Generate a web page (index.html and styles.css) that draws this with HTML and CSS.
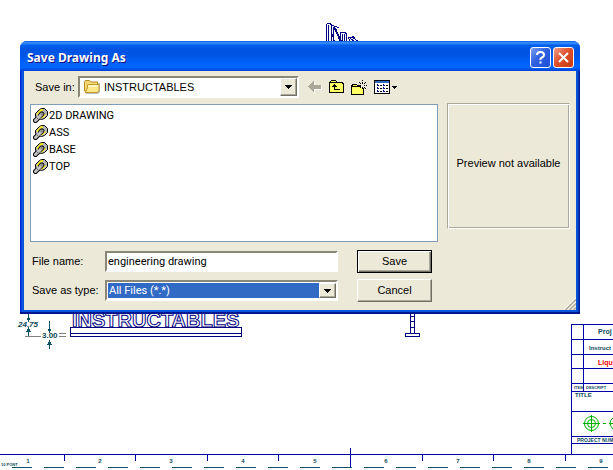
FILE: index.html
```html
<!DOCTYPE html>
<html lang="en">
<head>
<meta charset="utf-8">
<title>Save Drawing As</title>
<link rel="stylesheet" href="styles.css">
</head>
<body>
<svg class="sheet" aria-hidden="true">
  <!-- model, seen from above -->
  <g class="ink">
    <path d="M324.500 41.500h2v-17l1-1h3l1 2v16M328.500 41v-16M331.500 25.500h2l2 3 6 13M333.500 41v-14l7 14.500M331.500 33l3 8.500M340.500 41v-8l2-1h2l2 2v8M342.500 34v7.500M344.500 34v7.500M335.500 26l3 2M347.500 37.500h5l6 4M349.500 41l-1-4M350.500 38.500l4 3M352.500 36l2 2"/>
    <path d="M70.500 327v9.500h171v-9.500M70.500 333.500h171M70.500 327.500h171"/>
    <path d="M410.500 313v20M414.500 313v20M410.500 316.500h4M410.500 321.500h4M410.500 327.500h4M405.500 333.500h14v3h-14z"/>
  </g>
  <text class="lettering" x="72" y="327">INSTRUCTABLES</text>
  <!-- dimensions -->
  <g class="extension"><path d="M25 336.500h16M59 333.500h7M59 336.500h7"/></g>
  <g class="dimension">
    <path d="M28.500 313v7M28.500 328v8M49.500 321v10M49.500 341v8"/>
    <path d="M27 318h3l-1.500 3zM27 331h3l-1.500-3zM48 329h3l-1.500 3zM48 344h3l-1.500-3z"/>
  </g>
  <text class="note italic" x="18" y="327">24.75</text>
  <text class="note" x="42" y="338">3.00</text>
  <!-- title block -->
  <g class="frame">
    <path d="M0 454.500h613M571.500 324v130M583.500 324v67M571 324.500h42M571 339.500h42M571 354.500h42M571 368.500h42M571 383.500h42M571 391.500h42M571 411.500h42M571 436.500h42M571 443.500h42"/>
    <path d="M64.500 454v7M135.500 454v7M207.500 454v7M278.500 454v7M350.500 448v19M422.500 454v7M493.500 454v7M565.500 454v7"/>
  </g>
  <path class="trim" d="M12 467.500h601"/>
  <g class="projection">
    <circle cx="591.500" cy="423.500" r="7"/><circle cx="591.500" cy="423.500" r="4"/>
    <path d="M583 423.500h17M591.500 415v17M603 423.500h3M609 423.500h4M613 418q-3 2-3 5t3 6"/>
  </g>
  <text class="note small" x="598" y="334">Proj</text>
  <text class="note mini" x="589" y="350">Instruct</text>
  <text class="note small red" x="598" y="365">Liqu</text>
  <text class="note tiny" x="574" y="389">ITEM</text>
  <text class="note tiny" x="586" y="389">DESCRIPT</text>
  <text class="note mini" x="575" y="397">TITLE</text>
  <text class="note micro" x="577" y="442">PROJECT NUM</text>
  <g class="zones">
    <text x="28" y="463">1</text><text x="100" y="463">2</text><text x="171" y="463">3</text>
    <text x="243" y="463">4</text><text x="315" y="463">5</text><text x="386" y="463">6</text>
    <text x="458" y="463">7</text><text x="529" y="463">8</text><text x="601" y="463">9</text>
  </g>
  <text class="note tiny" x="1" y="466">10 PONT</text>
</svg>

<svg class="defs" aria-hidden="true">
  <symbol id="part" viewBox="0 0 15 15">
    <path fill="none" stroke="#000" stroke-width="5" stroke-linecap="round" d="M2.500 12.500L6 9"/>
    <path fill="#b4b4b4" stroke="#000" d="M2.500 8.500v-3l4-4 2-1h3l3 3v4l-3 3-3 1-3-1z"/>
    <path fill="none" stroke="#fff200" stroke-width="1.500" d="M4 6.500l4-4.500h2M8.500 10l4-3.500"/>
    <path fill="#909090" stroke="#000" d="M5.500 8.500v-2l2-2.500h2.500l1 1.500-.5 2L8 9.500z"/>
    <path fill="none" stroke="#c4c4c4" stroke-width="3" stroke-linecap="round" d="M2.500 12.500L7 8"/>
    <path fill="none" stroke="#666" d="M3.500 9.500l2 2"/>
  </symbol>
  <symbol id="drop" viewBox="0 0 7 4"><path fill="#000" d="M0 0h7v1H6v1H5v1H4v1H3V3H2V2H1V1H0z"/></symbol>
</svg>

<form class="dialog" aria-labelledby="dialog-title">
  <header class="titlebar">
    <h1 id="dialog-title">Save Drawing As</h1>
    <button type="button" class="caption help" aria-label="Help">
      <svg width="11" height="13" viewBox="0 0 11 13"><path d="M2 4q0-3 3.500-3T9 4q0 1.500-2 2.500T5.500 9M5.500 10.500v2"/></svg>
    </button>
    <button type="button" class="caption close" aria-label="Close">
      <svg width="11" height="11" viewBox="0 0 11 11"><path d="M1 1l9 9M10 1l-9 9"/></svg>
    </button>
  </header>

  <div class="content">
    <div class="lookin">
      <label for="folder">Save in:</label>
      <div class="combo">
        <svg class="folder" width="16" height="14" viewBox="0 0 16 14"><path fill="#777" opacity=".5" d="M2 3h14v9l-2 2H2z"/><path fill="#f5d978" stroke="#b88a18" d="M.5 11V2l1-1.500h4L7 2h6.500v9z"/><path fill="#ffe88a" stroke="#c59a28" d="M1 12.500L3.500 8V4.500h11.500v6l-1.500 2z"/><path fill="#fff6c4" d="M4 5h10v2H4z"/></svg>
        <select id="folder"><option>INSTRUCTABLES</option></select>
        <span class="arrow"><svg width="7" height="4"><use href="#drop"/></svg></span>
      </div>
      <div class="tools">
        <button type="button" aria-label="Back"><svg width="14" height="12" viewBox="0 0 14 12"><path fill="#fff" d="M6 1h1v4h7v4H7v3H6z"/><path fill="#aca899" d="M5 0h1v4h7v4H6v3H5v-1H4V9H3V8H2V7H1V6H0V5h1V4h1V3h1V2h1V1h1z"/></svg></button>
        <button type="button" aria-label="Up one level"><svg width="15" height="14" viewBox="0 0 15 14"><path fill="#000" d="M2 0h5v1h1v1h6v1h1v10H0V2h1V1h1z"/><path fill="#ffff66" d="M2 1h5v1H2zM1 4h13v8H1zM1 3h12v1H1z"/><path fill="#000" d="M5 4h1v1h1v1h1v1H6v2h5v1H5V7H3V6h1V5h1z"/></svg></button>
        <button type="button" aria-label="New folder"><svg width="16" height="15" viewBox="0 0 16 15"><path fill="#000" d="M1 4h5v1h1v1h6v9H0V5h1z"/><path fill="#ffff66" d="M2 5h4v1H2zM1 7h11v7H1z"/><path fill="#ece9d8" d="M10 4h4v4h-4z"/><path fill="#000" d="M11 0h1v1h-1zM11 2h1v2h-1zM11 7h1v2h-1zM7 5h3v1H7zM13 5h1v1h-1zM15 5h1v1h-1zM8 2h1v1H8zM9 3h1v1H9zM14 2h1v1h-1zM13 3h1v1h-1zM9 7h1v1H9zM13 7h1v1h-1zM14 8h1v1h-1zM12 9h1v5h-1z"/></svg></button>
        <button type="button" aria-label="Views"><svg width="24" height="14" viewBox="0 0 24 14"><path fill="#000" d="M0 0h16v14H0z"/><path fill="#316ac5" d="M1 1h14v2H1z"/><path fill="#fff" d="M1 3h14v10H1z"/><path fill="#000080" d="M3 4h1v1h1v1H3zM3 7h1v1h1v1H3zM3 10h1v1h1v1H3zM9 4h1v1h1v1H9zM9 7h1v1h1v1H9zM9 10h1v1h1v1H9z"/><path fill="#000" d="M6 5h2v1H6zM6 8h2v1H6zM6 11h2v1H6zM12 5h2v1h-2zM12 8h2v1h-2zM12 11h2v1h-2zM18 6h5v1h-1v1h-1v1h-1V8h-1V7h-1z"/></svg></button>
      </div>
    </div>

    <div class="panes">
      <ul class="files">
        <li><svg width="15" height="15"><use href="#part"/></svg>2D DRAWING</li>
        <li><svg width="15" height="15"><use href="#part"/></svg>ASS</li>
        <li><svg width="15" height="15"><use href="#part"/></svg>BASE</li>
        <li><svg width="15" height="15"><use href="#part"/></svg>TOP</li>
      </ul>
      <div class="preview">Preview not available</div>
    </div>

    <div class="fields">
      <label for="name">File name:</label>
      <input id="name" class="sunken" type="text" value="engineering drawing">
      <button type="submit" class="push default">Save</button>
      <label for="type">Save as type:</label>
      <div class="combo selected">
        <select id="type"><option>All Files (*.*)</option></select>
        <span class="arrow"><svg width="7" height="4"><use href="#drop"/></svg></span>
      </div>
      <button type="button" class="push">Cancel</button>
    </div>
  </div>
  <svg class="grip" width="12" height="12" viewBox="0 0 12 12"><path stroke="#fff" d="M0 11.500L11.500 0M4 11.500L11.500 4M8 11.500L11.500 8"/><path stroke="#aca899" stroke-width="1.500" d="M1.500 12L12 1.500M5.500 12L12 5.500M9.500 12L12 9.500"/></svg>
</form>
</body>
</html>
```

FILE: styles.css
```css
* {
  box-sizing: border-box;
}

body {
  margin: 0;
  min-height: 100vh;
  overflow: hidden;
  background: #fff;
  color: #000;
  font: 11px/14px "Liberation Sans", Arial, sans-serif;
}

button,
input,
select {
  margin: 0;
  font: inherit;
  color: inherit;
}

svg {
  display: block;
  flex: none;
}

.defs {
  position: absolute;
  width: 0;
  height: 0;
}

/* drawing sheet */
.sheet {
  position: absolute;
  inset: 0;
  width: 100%;
  height: 100%;
  fill: none;
}

.ink {
  stroke: #000080;
  shape-rendering: crispEdges;
}

.lettering {
  font-size: 20px;
  font-weight: bold;
  fill: #fff;
  stroke: #000080;
}

.extension {
  stroke: #808080;
}

.dimension {
  stroke: #0d5265;
  shape-rendering: crispEdges;
}

.frame {
  stroke: #0000a8;
  shape-rendering: crispEdges;
}

.trim {
  stroke: #0d5265;
  stroke-dasharray: 20 12;
}

.projection {
  stroke: #00b000;
}

.note,
.zones {
  fill: #0d4a5c;
  font-size: 8px;
  font-weight: bold;
}

.italic {
  font-style: italic;
}

.note.small {
  font-size: 7px;
}

.note.mini {
  font-size: 6px;
}

.note.micro {
  font-size: 5px;
}

.note.tiny {
  font-size: 4px;
}

.note.red {
  fill: #f00;
}

.zones {
  font-size: 6px;
  text-anchor: middle;
}

/* dialog window */
.dialog {
  position: absolute;
  top: 41px;
  left: 20px;
  right: 33px;
  padding: 0 4px 4px;
  border-radius: 7px 7px 0 0;
  background: linear-gradient(to right, #0019cf 0, #0855dd 2px, #0855dd calc(100% - 3px), #001590 100%);
  box-shadow: inset 0 -2px #001590;
}

.titlebar {
  display: flex;
  align-items: center;
  gap: 2px;
  height: 30px;
  margin: 0 -4px;
  padding: 3px 6px 0 7px;
  border-radius: 7px 7px 0 0;
  background: linear-gradient(#0a5be0 0, #3d95ff 2px, #0560ee 4px, #0054e3 8px, #0055e5 14px, #0066ff 24px, #0062f8 27px, #003dd7 30px);
}

.titlebar h1 {
  flex: 1;
  margin: 0;
  color: #fff;
  font: bold 12px/16px "Noto Sans", "Open Sans", sans-serif;
  text-shadow: 1px 1px #0f1089;
}

.caption {
  display: grid;
  place-items: center;
  width: 21px;
  height: 21px;
  padding: 0;
  border: 1px solid #fff;
  border-radius: 3px;
  background: linear-gradient(135deg, #7da0f0, #2f60e0 45%, #1e50d8);
}

.caption.close {
  background: linear-gradient(135deg, #f0a088, #e0502c 45%, #c83c10);
}

.caption svg {
  fill: none;
  stroke: #fff;
  stroke-width: 2;
}

.content {
  padding: 5px 6px 8px;
  background: #ece9d8;
}

.lookin {
  display: flex;
  align-items: center;
  height: 22px;
  margin-bottom: 6px;
  padding-left: 5px;
}

.lookin label {
  width: 43px;
}

.lookin .combo {
  width: 221px;
  height: 22px;
}

.combo,
.sunken {
  border: 2px solid;
  border-color: #8a8776 #fff #fff #8a8776;
  background: #fff;
}

.combo {
  display: flex;
  align-items: center;
  padding: 0 0 0 1px;
}

.combo select {
  flex: 1;
  min-width: 0;
  height: 100%;
  padding: 0 4px;
  border: 0;
  outline: 0;
  background: transparent;
  appearance: none;
}

.folder {
  margin-left: 3px;
}

.arrow {
  display: grid;
  place-items: center;
  width: 17px;
  height: 100%;
  border: 1px solid;
  border-color: #fff #716f64 #716f64 #fff;
  background: #ece9d8;
  box-shadow: inset -1px -1px #aca899;
  pointer-events: none;
}

.tools {
  display: flex;
  align-items: center;
  gap: 7px;
  margin-left: 9px;
}

.tools button {
  padding: 0;
  border: 0;
  background: none;
}

.tools svg {
  shape-rendering: crispEdges;
}

.panes {
  display: grid;
  grid-template-columns: 1fr 123px;
  gap: 9px;
  align-items: start;
}

.files {
  height: 138px;
  margin: 0;
  padding: 2px;
  border: 1px solid #7f9db9;
  background: #fff;
  font-family: Roboto, "Liberation Sans", sans-serif;
  list-style: none;
}

.files li {
  display: flex;
  align-items: center;
  gap: 1px;
  height: 17px;
}

.preview {
  display: grid;
  place-items: center;
  height: 126px;
  margin-top: -1px;
  padding-bottom: 6px;
  border: 1px solid #aca899;
  border-right-color: #fff;
  border-bottom-color: #fff;
  box-shadow: inset 1px 1px #fff, inset -1px -1px #aca899;
}

.fields {
  display: grid;
  grid-template-columns: 75px minmax(0, 233px) 75px;
  grid-auto-rows: 23px;
  row-gap: 6px;
  align-items: center;
  margin-top: 8px;
}

.fields label {
  padding: 0 0 2px 2px;
}

.fields .sunken,
.fields .combo {
  width: 100%;
  height: 21px;
}

.sunken {
  padding: 0 1px;
  outline: 0;
  font-family: Roboto, "Liberation Sans", sans-serif;
}

.selected {
  padding: 1px 0 1px 1px;
}

.selected select {
  padding: 0 1px;
  background: #316ac5;
  color: #fff;
  font-family: Roboto, "Liberation Sans", sans-serif;
}

.push {
  height: 23px;
  margin-left: 19px;
  width: 75px;
  padding: 0 0 2px;
  border: 1px solid;
  border-color: #fff #716f64 #716f64 #fff;
  background: #ece9d8;
  box-shadow: inset -1px -1px #aca899;
}

.push.default {
  border-color: #000;
  box-shadow: inset 1px 1px #fff, inset -1px -1px #716f64, inset -2px -2px #aca899;
}

.grip {
  position: absolute;
  right: 4px;
  bottom: 4px;
}
```
